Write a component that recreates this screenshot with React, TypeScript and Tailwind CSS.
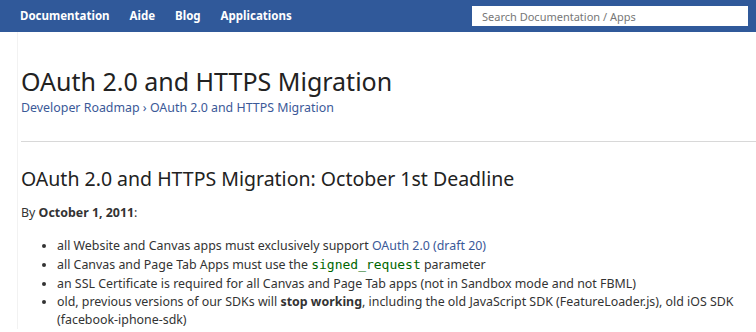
const font = { fontFamily: '"Noto Sans", "Lucida Grande", sans-serif' };

const navItems = ['Documentation', 'Aide', 'Blog', 'Applications'];

export default function App() {
    return (
        <div className="w-[756px] h-[332px] overflow-hidden bg-white text-[#333]" style={font}>
            {/* Top bar */}
            <div className="h-8 bg-[#30599a] flex items-center justify-between pl-5 pr-2">
                <nav className="flex items-center gap-[20px]">
                    {navItems.map((item) => (
                        <a key={item} href="#" className="text-white font-bold text-[11.5px] leading-none">
                            {item}
                        </a>
                    ))}
                </nav>
                <input
                    placeholder="Search Documentation / Apps"
                    className="w-[276px] h-5 bg-white px-[10px] text-[11px] text-[#333] placeholder:text-[#777] outline-none"
                />
            </div>

            {/* Content */}
            <div className="ml-[17px] border-l border-[#f2f2f2] pl-[3px]">
                <div className="pt-[33px] pb-[25px] border-b border-[#d8d8d8]">
                    <h1 className="text-[25px] leading-[32px] text-[#222]">OAuth 2.0 and HTTPS Migration</h1>
                    <div className="mt-[3px] text-[12.4px] leading-[16px] text-[#3b5998]">
                        <a href="#">Developer Roadmap</a> › <a href="#">OAuth 2.0 and HTTPS Migration</a>
                    </div>
                </div>

                <h2 className="mt-[23px] text-[19.5px] leading-[28px] text-[#222]">
                    OAuth 2.0 and HTTPS Migration: October 1st Deadline
                </h2>
                <p className="mt-[12px] text-[12.4px] leading-[16px]">
                    By <b>October 1, 2011</b>:
                </p>
                <ul className="mt-[16px] list-disc pl-[36px] text-[12.4px] leading-[18px]">
                    <li>
                        all Website and Canvas apps must exclusively support{' '}
                        <a href="#" className="text-[#3b5998]">OAuth 2.0 (draft 20)</a>
                    </li>
                    <li className="leading-[20px]">
                        all Canvas and Page Tab Apps must use the{' '}
                        <code className="text-[#006600] text-[13px]" style={{ fontFamily: '"DejaVu Sans Mono", monospace' }}>
                            signed_request
                        </code>{' '}
                        parameter
                    </li>
                    <li>an SSL Certificate is required for all Canvas and Page Tab apps (not in Sandbox mode and not FBML)</li>
                    <li>
                        old, previous versions of our SDKs will <b>stop working</b>, including the old JavaScript SDK
                        (FeatureLoader.js), old iOS SDK (facebook-iphone-sdk)
                    </li>
                </ul>
            </div>
        </div>
    );
}
